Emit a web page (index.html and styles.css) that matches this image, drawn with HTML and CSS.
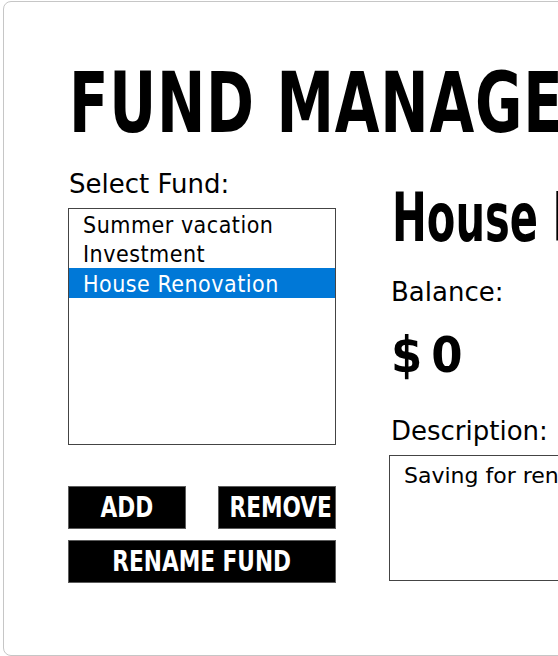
FILE: index.html
```html
<!DOCTYPE html>
<html lang="en">
<head>
<meta charset="utf-8">
<title>Fund Manager</title>
<link rel="stylesheet" href="styles.css">
</head>
<body>
<div class="window">
  <h1 class="title">FUND MANAGER</h1>
  <div class="main">
    <div class="left">
      <div class="label">Select Fund:</div>
      <ul class="listbox">
        <li class="item">Summer vacation</li>
        <li class="item">Investment</li>
        <li class="item selected">House Renovation</li>
      </ul>
      <div class="buttons">
        <button class="btn"><span class="btn-text">ADD</span></button>
        <button class="btn"><span class="btn-text">REMOVE</span></button>
        <button class="btn wide"><span class="btn-text">RENAME FUND</span></button>
      </div>
    </div>
    <div class="right">
      <h2 class="fund-name">House Renovation</h2>
      <div class="label balance-label">Balance:</div>
      <div class="balance">$0</div>
      <div class="label desc-label">Description:</div>
      <div class="textbox">Saving for renovation</div>
    </div>
  </div>
</div>
</body>
</html>
```
FILE: styles.css
```css
html, body {
  margin: 0;
  padding: 0;
  background: #ffffff;
  overflow: hidden;
  width: 558px;
  height: 656px;
}

.window {
  box-sizing: border-box;
  margin: 1px 0 0 3px;
  width: 800px;
  height: 655px;
  border: 1px solid #c6c6c6;
  border-radius: 8px;
  padding: 59px 0 0 64px;
  font-family: "DejaVu Sans Condensed", "DejaVu Sans", sans-serif;
  color: #000;
}

.title {
  margin: 0 0 0 1px;
  font-family: "DejaVu Sans Condensed", "DejaVu Sans", sans-serif;
  font-weight: bold;
  font-size: 84px;
  line-height: 1;
  word-spacing: 1px;
  letter-spacing: 1px;
  white-space: nowrap;
  transform: scaleX(0.765);
  transform-origin: left center;
}

.main {
  display: grid;
  grid-template-columns: 268px 400px;
  column-gap: 53px;
  align-items: start;
}

.label {
  font-family: "DejaVu Sans", sans-serif;
  font-size: 26px;
  line-height: 1;
  white-space: nowrap;
}

.left .label {
  margin-top: 26px;
  margin-left: 1px;
}

.listbox {
  list-style: none;
  box-sizing: border-box;
  margin: 11px 0 0 0;
  padding: 0;
  width: 268px;
  height: 237px;
  border: 1px solid #444;
}

.item {
  box-sizing: border-box;
  height: 29.5px;
  padding: 2.5px 0 0 14px;
  font-size: 23px;
  letter-spacing: 0.5px;
  line-height: 27px;
  white-space: nowrap;
}

.item.selected {
  background: #0078d7;
  color: #fff;
}

.buttons {
  margin-top: 41px;
  display: grid;
  grid-template-columns: 118px 118px;
  justify-content: space-between;
  row-gap: 11px;
}

.btn {
  box-sizing: border-box;
  height: 43px;
  margin: 0;
  padding: 0;
  background: #000;
  color: #fff;
  border: 1px solid #5c5c5c;
  font-family: "DejaVu Sans Condensed", "DejaVu Sans", sans-serif;
  font-weight: bold;
  font-size: 29px;
  line-height: 1;
  white-space: nowrap;
}

.btn-text {
  display: inline-block;
  transform: scaleX(0.83);
}

.btn.wide {
  grid-column: 1 / 3;
}

.fund-name {
  margin: 39.5px 0 0 3px;
  font-family: "DejaVu Sans Condensed", "DejaVu Sans", sans-serif;
  font-weight: bold;
  font-size: 67px;
  line-height: 1;
  white-space: nowrap;
  transform: scaleX(0.69);
  transform-origin: left center;
}

.balance-label {
  margin-top: 27px;
  margin-left: 2px;
}

.balance {
  margin-top: 25.7px;
  margin-left: 2px;
  font-family: "DejaVu Sans Condensed", sans-serif;
  font-weight: bold;
  font-size: 50px;
  line-height: 1;
  letter-spacing: 9px;
}

.desc-label {
  margin-top: 38.3px;
  margin-left: 2px;
}

.textbox {
  box-sizing: border-box;
  margin-top: 11px;
  width: 400px;
  height: 126px;
  border: 1px solid #444;
  padding: 9px 0 0 14px;
  font-family: "DejaVu Sans", sans-serif;
  font-size: 22px;
  line-height: 1;
  white-space: nowrap;
}
```
